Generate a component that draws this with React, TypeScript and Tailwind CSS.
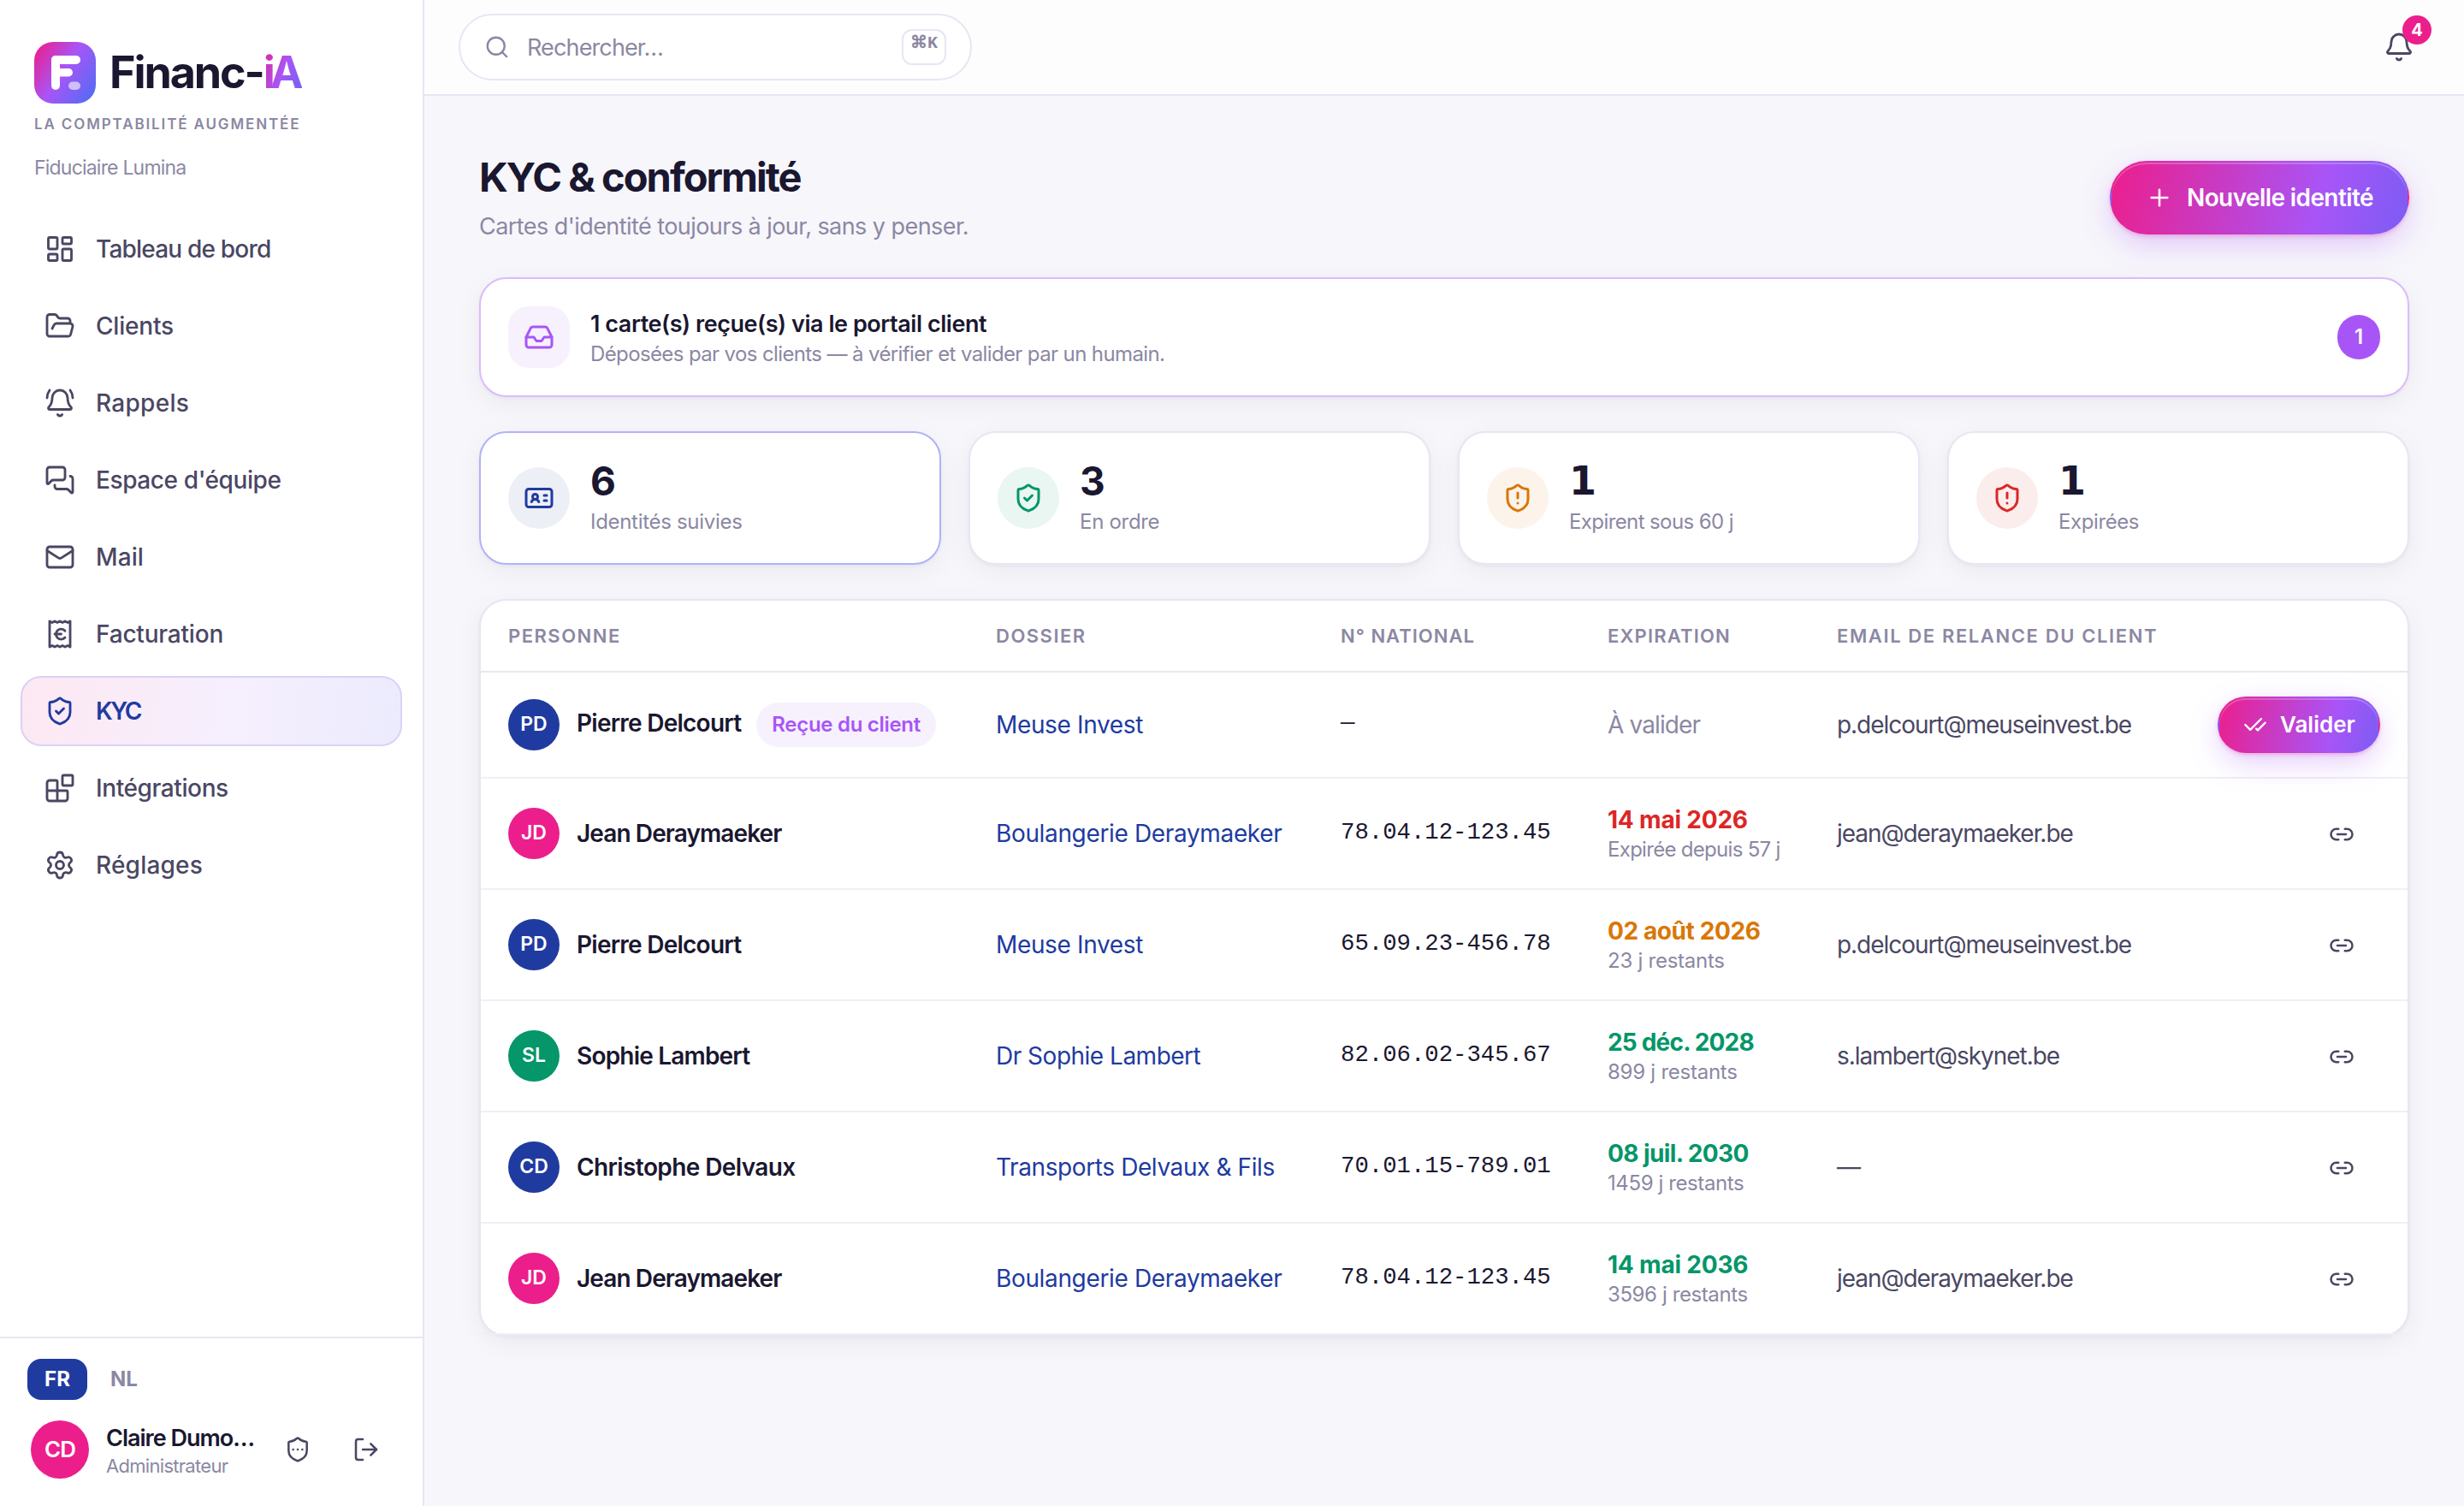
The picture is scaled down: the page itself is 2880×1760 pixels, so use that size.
import type { ReactNode } from "react";
import {
  Bell,
  BellRing,
  Blocks,
  CheckCheck,
  FolderOpen,
  IdCard,
  Inbox,
  LayoutDashboard,
  Link2,
  LogOut,
  Mail,
  MessagesSquare,
  Plus,
  ReceiptEuro,
  Search,
  Settings,
  ShieldAlert,
  ShieldCheck,
  ShieldEllipsis,
  type LucideIcon,
} from "lucide-react";

const navItems: { label: string; icon: LucideIcon; tracking: string; active?: boolean }[] = [
  { label: "Tableau de bord", icon: LayoutDashboard, tracking: "tracking-[-0.8px]" },
  { label: "Clients", icon: FolderOpen, tracking: "tracking-[-0.2px]" },
  { label: "Rappels", icon: BellRing, tracking: "tracking-[0.3px]" },
  { label: "Espace d'équipe", icon: MessagesSquare, tracking: "tracking-[-0.4px]" },
  { label: "Mail", icon: Mail, tracking: "tracking-[0.1px]" },
  { label: "Facturation", icon: ReceiptEuro, tracking: "tracking-[-0.2px]" },
  { label: "KYC", icon: ShieldCheck, tracking: "tracking-[-2.4px]", active: true },
  { label: "Intégrations", icon: Blocks, tracking: "tracking-[-0.4px]" },
  { label: "Réglages", icon: Settings, tracking: "tracking-[0.2px]" },
];

const stats: { value: string; label: string; icon: LucideIcon; tone: string; tracking: string; active?: boolean }[] = [
  { value: "6", label: "Identités suivies", icon: IdCard, tone: "bg-[#edeff7] text-[#203b9f]", tracking: "tracking-[-0.3px]", active: true },
  { value: "3", label: "En ordre", icon: ShieldCheck, tone: "bg-[#e9f6f2] text-[#059669]", tracking: "tracking-[-0.3px]" },
  { value: "1", label: "Expirent sous 60 j", icon: ShieldAlert, tone: "bg-[#fcf3ea] text-[#d97706]", tracking: "tracking-[-0.6px]" },
  { value: "1", label: "Expirées", icon: ShieldAlert, tone: "bg-[#fceded] text-[#dc2626]", tracking: "tracking-[-0.4px]" },
];

type Row = {
  initials: string;
  color: string;
  name: string;
  nameTracking: string;
  client: string;
  clientTracking: string;
  national: string;
  date?: string;
  left?: string;
  dateStyle?: string;
  leftTracking?: string;
  email: string;
};

const rows: Row[] = [
  { initials: "PD", color: "bg-[#203b9f]", name: "Pierre Delcourt", nameTracking: "tracking-[-0.75px]", client: "Meuse Invest", clientTracking: "tracking-[-0.35px]", national: "—", email: "p.delcourt@meuseinvest.be" },
  { initials: "JD", color: "bg-[#ec1e8c]", name: "Jean Deraymaeker", nameTracking: "tracking-[-0.9px]", client: "Boulangerie Deraymaeker", clientTracking: "tracking-[-0.35px]", national: "78.04.12-123.45", date: "14 mai 2026", left: "Expirée depuis 57 j", dateStyle: "text-[#dc2626] tracking-[-0.2px]", leftTracking: "tracking-[-0.7px]", email: "jean@deraymaeker.be" },
  { initials: "PD", color: "bg-[#203b9f]", name: "Pierre Delcourt", nameTracking: "tracking-[-0.75px]", client: "Meuse Invest", clientTracking: "tracking-[-0.35px]", national: "65.09.23-456.78", date: "02 août 2026", left: "23 j restants", dateStyle: "text-[#d97706] tracking-[-0.4px]", leftTracking: "tracking-[-0.25px]", email: "p.delcourt@meuseinvest.be" },
  { initials: "SL", color: "bg-[#059669]", name: "Sophie Lambert", nameTracking: "tracking-[-0.8px]", client: "Dr Sophie Lambert", clientTracking: "tracking-[-0.5px]", national: "82.06.02-345.67", date: "25 déc. 2028", left: "899 j restants", dateStyle: "text-[#059669] tracking-[-0.8px]", leftTracking: "tracking-[-0.25px]", email: "s.lambert@skynet.be" },
  { initials: "CD", color: "bg-[#203b9f]", name: "Christophe Delvaux", nameTracking: "tracking-[-0.6px]", client: "Transports Delvaux & Fils", clientTracking: "tracking-[-0.4px]", national: "70.01.15-789.01", date: "08 juil. 2030", left: "1459 j restants", dateStyle: "text-[#059669] tracking-[-0.6px]", leftTracking: "tracking-[-0.4px]", email: "—" },
  { initials: "JD", color: "bg-[#ec1e8c]", name: "Jean Deraymaeker", nameTracking: "tracking-[-0.9px]", client: "Boulangerie Deraymaeker", clientTracking: "tracking-[-0.35px]", national: "78.04.12-123.45", date: "14 mai 2036", left: "3596 j restants", dateStyle: "text-[#059669] tracking-[-0.2px]", leftTracking: "tracking-[-0.4px]", email: "jean@deraymaeker.be" },
];

const columns = "grid grid-cols-[570px_403px_312px_268px_1fr_auto] items-center px-8";
const cardShadow = "shadow-[0_2px_4px_rgba(26,23,48,0.04),0_8px_32px_rgba(26,23,48,0.05)]";

function Logo() {
  return (
    <div className="flex items-center gap-4">
      <svg width="72" height="72" viewBox="0 0 72 72">
        <defs>
          <linearGradient id="logo" x1="0" y1="0.1" x2="1" y2="0.75">
            <stop offset="0" stopColor="#ec1e8c" />
            <stop offset="0.5" stopColor="#a855f7" />
            <stop offset="1" stopColor="#5b6af3" />
          </linearGradient>
        </defs>
        <rect width="72" height="72" rx="22" fill="url(#logo)" />
        <rect x="20" y="16" width="10" height="40" rx="5" fill="#fff" />
        <rect x="20" y="16" width="34" height="10" rx="5" fill="#fff" />
        <rect x="20" y="31" width="25" height="9.5" rx="4.75" fill="#fff" />
        <rect x="22" y="24" width="8" height="12" fill="#fff" />
        <rect x="40" y="46.5" width="14" height="9.5" rx="4.75" fill="#fff" fillOpacity="0.6" />
      </svg>
      <div className="flex pt-px text-[52px] leading-[72px] font-bold text-[#1a1730]">
        <span className="tracking-[-2.1px]">Financ-</span>
        <span className="bg-[linear-gradient(115deg,#ec1e8c,#a855f7_50%,#6366f1)] bg-clip-text pr-1 text-transparent tracking-[-6px]">iA</span>
      </div>
    </div>
  );
}

function GradientButton({ className, children }: { className: string; children: ReactNode }) {
  return (
    <button
      className={`flex items-center rounded-full border-2 border-transparent bg-[linear-gradient(105deg,#ec1e8c,#a855f7_70%,#7c5cf4)] font-semibold text-white shadow-[inset_0_2px_0_rgba(255,255,255,0.22),0_2px_4px_rgba(236,30,140,0.25),0_12px_36px_-4px_rgba(168,85,247,0.35)] ${className}`}
    >
      {children}
    </button>
  );
}

function Sidebar() {
  return (
    <aside className="flex w-[496px] shrink-0 flex-col border-r-2 border-[#e8e6f2] bg-white">
      <div className="h-[250px] px-10 pt-12">
        <Logo />
        <div className="mt-3 text-[17px] leading-6 font-semibold tracking-[1.87px] text-[#8b88a3]">LA COMPTABILITÉ AUGMENTÉE</div>
        <div className="mt-[23px] text-[23px] leading-8 tracking-[-0.8px] text-[#8b88a3]">Fiduciaire Lumina</div>
      </div>

      <nav className="flex flex-1 flex-col gap-2 px-6">
        {navItems.map(({ label, icon: Icon, tracking, active }) => (
          <a
            key={label}
            className={`flex h-[82px] items-center gap-6 rounded-3xl border-2 px-[26px] text-[28px] ${
              active
                ? "border-[#d9d2f7] bg-[linear-gradient(100deg,#fde8f2,#f6effe_55%,#ebebfd)] font-semibold text-[#203b9f]"
                : "border-transparent font-medium text-[#4a4763]"
            }`}
          >
            <Icon size={36} strokeWidth={1.9} />
            <span className={tracking}>{label}</span>
          </a>
        ))}
      </nav>

      <div className="border-t-2 border-[#e8e6f2] pt-6 pb-8">
        <div className="flex gap-[6px] px-8 text-2xl leading-[48px] font-bold">
          <span className="w-[70px] rounded-2xl bg-[#203b9f] text-center text-white">FR</span>
          <span className="w-[74px] text-center text-[#8b88a3]">NL</span>
        </div>
        <div className="mt-6 flex items-center pl-9">
          <div className="flex size-[68px] items-center justify-center rounded-full bg-[#ec1e8c] pb-px text-[26px] font-semibold tracking-[-1px] text-white">CD</div>
          <div className="ml-5 w-[184px]">
            <div className="pt-px text-[27px] leading-9 font-semibold tracking-[-1px] text-[#1a1730]">Claire Dumo…</div>
            <div className="text-[22px] leading-7 tracking-[-0.7px] text-[#8b88a3]">Administrateur</div>
          </div>
          <button className="flex w-20 justify-center text-[#4a4763]">
            <ShieldEllipsis size={32} strokeWidth={1.9} />
          </button>
          <button className="flex w-20 justify-center text-[#4a4763]">
            <LogOut size={32} strokeWidth={1.9} />
          </button>
        </div>
      </div>
    </aside>
  );
}

function TopBar() {
  return (
    <header className="flex h-28 items-center justify-between border-b-2 border-[#e8e6f2] bg-[#fdfdfe] pr-[58px] pl-10">
      <div className="flex h-[78px] w-[600px] items-center rounded-full border-2 border-[#e8e6f2] bg-white px-7">
        <Search size={30} strokeWidth={1.9} className="text-[#8b88a3]" />
        <span className="ml-5 flex-1 pt-[2px] text-[27px] tracking-[-0.87px] text-[#8b88a3]">Rechercher…</span>
        <kbd className="h-[42px] w-[52px] rounded-xl border-2 border-[#e8e6f2] text-center font-['Liberation_Mono'] text-[20px] leading-[29px] font-bold text-[#8b88a3]">⌘K</kbd>
      </div>
      <div className="relative text-[#4a4763]">
        <Bell size={36} strokeWidth={1.9} />
        <span className="absolute -top-[19px] left-[22px] size-[34px] rounded-full bg-[#ec1e8c] text-center text-[20px] leading-[34px] font-bold text-white">4</span>
      </div>
    </header>
  );
}

function PortalBanner() {
  return (
    <section className={`mb-10 flex h-[140px] items-center rounded-[32px] border-2 border-[#dcbbfc] bg-white px-8 ${cardShadow}`}>
      <div className="flex size-[72px] items-center justify-center rounded-3xl bg-[#f7f1fe] text-[#a855f7]">
        <Inbox size={36} strokeWidth={2} />
      </div>
      <div className="ml-6 flex-1">
        <div className="pt-px text-[27px] leading-[39px] font-semibold tracking-[-0.45px] text-[#1a1730]">1 carte(s) reçue(s) via le portail client</div>
        <div className="text-2xl leading-8 tracking-[-0.62px] text-[#8b88a3]">Déposées par vos clients — à vérifier et valider par un humain.</div>
      </div>
      <span className="h-[52px] w-[50px] rounded-full bg-[#a855f7] text-center text-2xl leading-[52px] font-semibold text-white">1</span>
    </section>
  );
}

function Stats() {
  return (
    <section className="mb-10 grid grid-cols-4 gap-8">
      {stats.map(({ value, label, icon: Icon, tone, tracking, active }) => (
        <div
          key={label}
          className={`flex h-[156px] items-center gap-6 rounded-[32px] border-2 bg-white px-8 ${active ? "border-[#b1b2f8]" : "border-[#e8e6f2]"} ${cardShadow}`}
        >
          <div className={`flex size-[72px] items-center justify-center rounded-full ${tone}`}>
            <Icon size={36} strokeWidth={2} />
          </div>
          <div>
            <div className={`leading-[56px] font-bold text-[#1a1730] ${value === "1" ? "font-['DejaVu_Sans'] text-[46px]" : "text-[46px]"}`}>{value}</div>
            <div className={`text-2xl leading-10 text-[#8b88a3] ${tracking}`}>{label}</div>
          </div>
        </div>
      ))}
    </section>
  );
}

function IdentityRow({ row }: { row: Row }) {
  const pending = !row.date;
  return (
    <div className={`${columns} border-b-2 border-[#f0eff6] ${pending ? "h-[124px] pb-px" : "h-[130px]"}`}>
      <div className="flex items-center">
        <span className={`size-[60px] rounded-full text-center text-[23px] leading-[58px] font-semibold text-white ${row.color}`}>{row.initials}</span>
        <span className={`ml-5 text-[28px] font-semibold text-[#1a1730] ${row.nameTracking} ${pending ? "pb-[3px]" : ""}`}>{row.name}</span>
        {pending && (
          <span className="ml-[18px] rounded-full bg-[#f7f1fe] px-[18px] text-2xl leading-[52px] font-semibold tracking-[-0.3px] text-[#a855f7]">Reçue du client</span>
        )}
      </div>
      <div className={`text-[28px] text-[#203b9f] ${row.clientTracking}`}>{row.client}</div>
      <div className="pb-[2px] font-['Liberation_Mono'] text-[27.3px] text-[#1a1730]">{row.national}</div>
      {pending ? (
        <div className="text-[28px] tracking-[-0.88px] text-[#8b88a3]">À valider</div>
      ) : (
        <div className="pt-[2px]">
          <div className={`text-[28px] leading-9 font-bold ${row.dateStyle}`}>{row.date}</div>
          <div className={`text-2xl leading-[34px] text-[#8b88a3] ${row.leftTracking}`}>{row.left}</div>
        </div>
      )}
      <div className="text-[28px] tracking-[-1.05px] text-[#4a4763]">{row.email}</div>
      {pending ? (
        <GradientButton className="h-[66px] w-[190px] gap-[15px] pl-7 text-[26px]">
          <CheckCheck size={28} strokeWidth={2} />
          Valider
        </GradientButton>
      ) : (
        <button className="mr-[30px] pt-px text-[#4a4763]">
          <Link2 size={30} strokeWidth={2} />
        </button>
      )}
    </div>
  );
}

export default function App() {
  return (
    <div className="flex h-[1760px] w-[2880px] bg-[#f7f6fb] font-['Inter',sans-serif]">
      <Sidebar />
      <div className="flex-1">
        <TopBar />
        <main className="px-16 pt-[67px]">
          <div className="mb-[41px] flex items-center justify-between">
            <div>
              <h1 className="text-[47px] leading-[56px] font-bold tracking-[-1.95px] text-[#1a1730]">KYC &amp; conformité</h1>
              <p className="mt-[11px] text-[27px] leading-[37px] tracking-[-0.56px] text-[#8b88a3]">Cartes d'identité toujours à jour, sans y penser.</p>
            </div>
            <GradientButton className="h-[86px] w-[350px] gap-4 pl-10 text-[28px] tracking-[-0.6px]">
              <Plus size={32} strokeWidth={1.9} />
              Nouvelle identité
            </GradientButton>
          </div>

          <PortalBanner />
          <Stats />

          <section className={`rounded-[32px] border-2 border-[#e8e6f2] bg-white ${cardShadow}`}>
            <div className={`${columns} h-[84px] border-b-2 border-[#e8e6f2] text-[22px] font-semibold tracking-[1.5px] text-[#8b88a3]`}>
              <div>PERSONNE</div>
              <div>DOSSIER</div>
              <div className="tracking-[1.02px]">N° NATIONAL</div>
              <div className="tracking-[1.18px]">EXPIRATION</div>
              <div className="tracking-[1.61px]">EMAIL DE RELANCE DU CLIENT</div>
            </div>
            {rows.map((row, i) => (
              <IdentityRow key={i} row={row} />
            ))}
          </section>
        </main>
      </div>
    </div>
  );
}
